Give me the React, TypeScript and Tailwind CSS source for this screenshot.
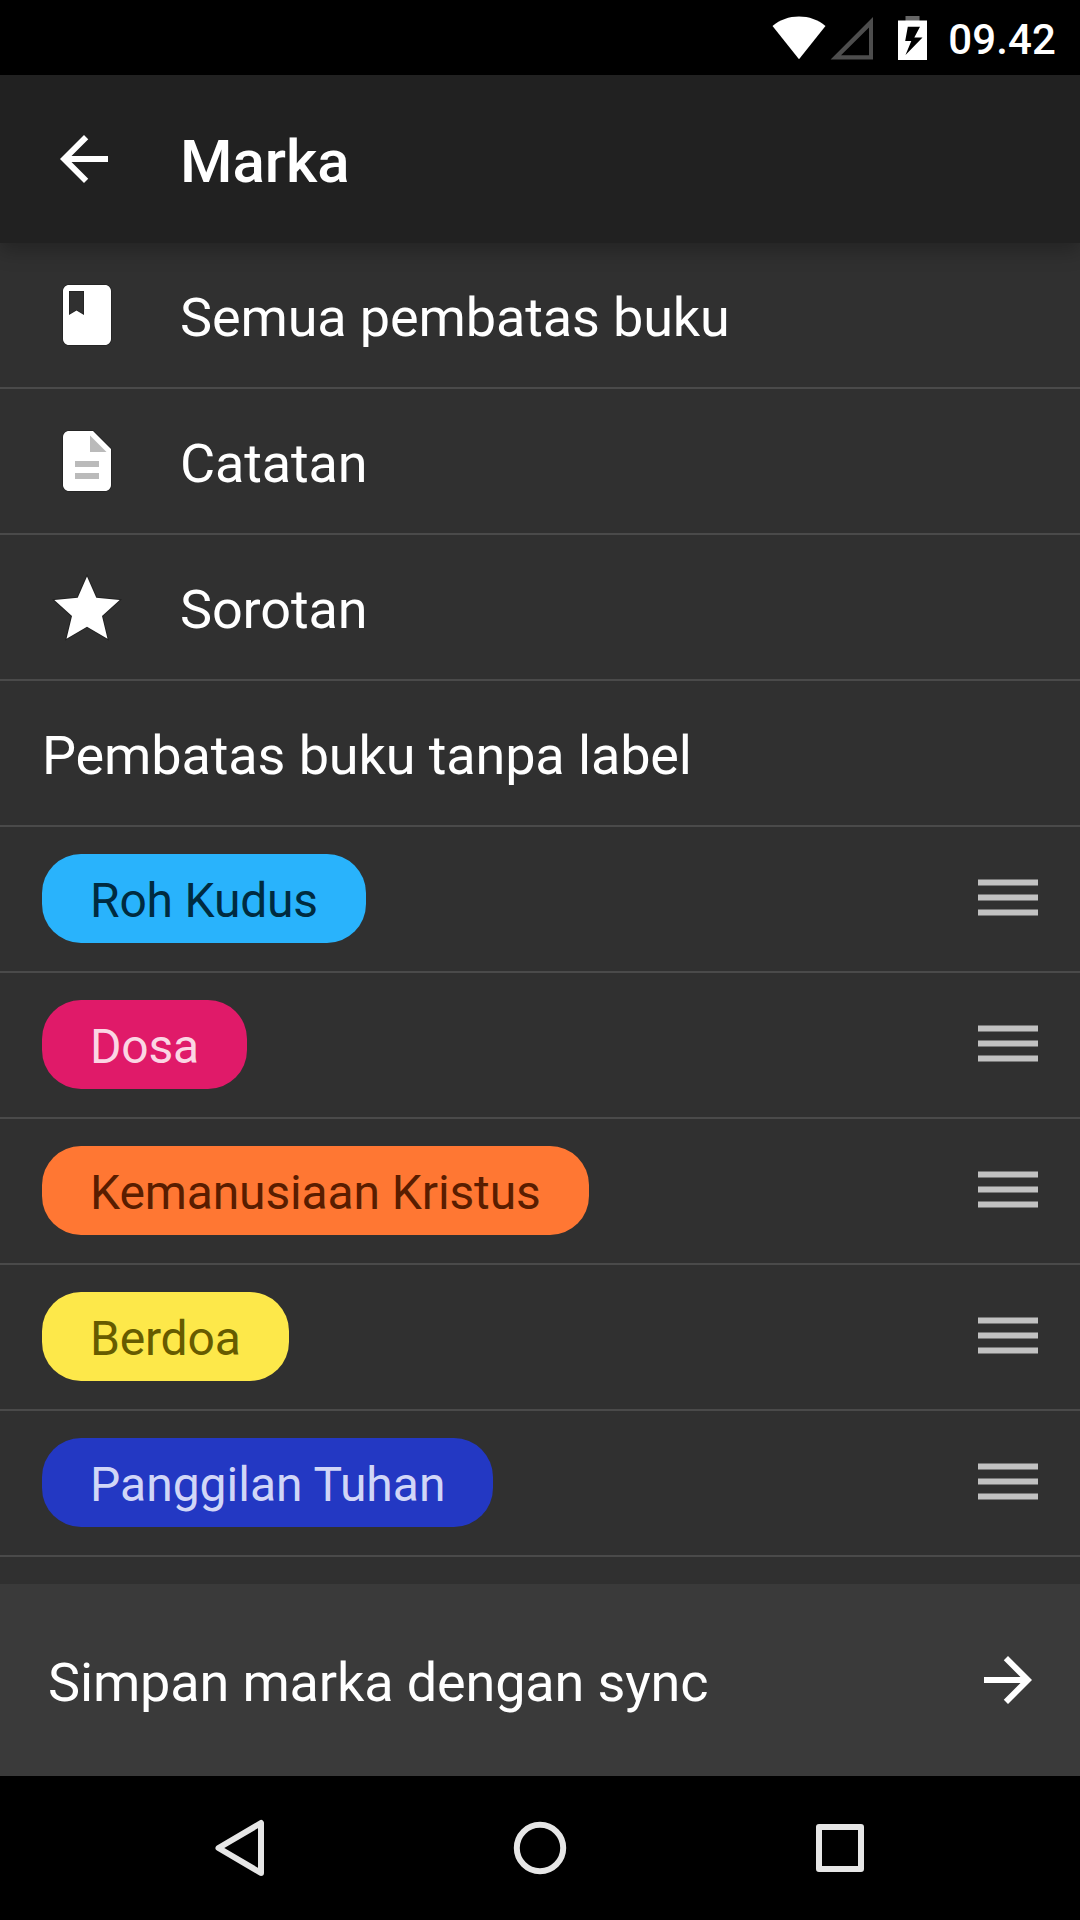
import type { ReactNode } from "react";

function StatusBar() {
  return (
    <div className="flex h-[75px] shrink-0 items-center justify-end bg-black pr-[24px]">
      <svg className="h-[44px] w-[54px]" viewBox="0 0 54 44" fill="#fff">
        <path d="M0.5 10C8 3.8 17 .6 27 .6S46 3.8 53.5 10L27 43.2z" />
      </svg>
      <svg className="ml-[4px] h-[44px] w-[44px]" viewBox="0 0 44 44" fill="#4d4d4d">
        <path fillRule="evenodd" d="M43 1v42.5H.6zM39 11.500L11 39.300h28z" />
      </svg>
      <svg className="ml-[23px] h-[44px] w-[30px]" viewBox="0 0 30 44">
        <path fill="#666" d="M8.500 0h14v5h-14z" />
        <path fill="#fff" fillRule="evenodd" d="M1 4.500h29v39.500H1zM10.800 10.800L8.200 25h6.100L8.500 39L25.500 21.600h-8.200L23 10.800z" />
      </svg>
      <span className="ml-[21px] pt-[4px] text-[42px] font-medium leading-none tracking-[0.1px]">09.42</span>
    </div>
  );
}

function BookIcon() {
  return (
    <svg className="size-[72px]" viewBox="0 0 24 24">
      <path
        fill="#fff"
        stroke="#000"
        strokeOpacity="0.3"
        strokeWidth="0.5"
        paintOrder="stroke"
        fillRule="evenodd"
        d="M18 2H6c-1.100 0-2 .9-2 2v16c0 1.100.9 2 2 2h12c1.100 0 2-.9 2-2V4c0-1.100-.9-2-2-2zM6 4h5v8l-2.500-1.500L6 12V4z"
      />
    </svg>
  );
}

function NoteIcon() {
  return (
    <svg className="size-[72px]" viewBox="0 0 24 24">
      <path
        fill="#fff"
        stroke="#000"
        strokeOpacity="0.3"
        strokeWidth="0.5"
        paintOrder="stroke"
        d="M14 2H6c-1.100 0-2 .9-2 2v16c0 1.100.9 2 2 2h12c1.100 0 2-.9 2-2V8z"
      />
      <path fill="#bababa" d="M13 3.500V9h5.500zM8 12h8v2H8zM8 16h8v2H8z" />
    </svg>
  );
}

function StarIcon() {
  return (
    <svg className="size-[72px]" viewBox="0 0 72 72">
      <path
        fill="#fff"
        stroke="#000"
        strokeOpacity="0.3"
        strokeWidth="2"
        paintOrder="stroke"
        d="M36 5.500L45.300 26.700L68.700 29L51 45L56.500 67.700L36 55.700L15.500 67.700L21 45L3.300 29L26.700 26.700z"
      />
    </svg>
  );
}

function Row({ children, className }: { children: ReactNode; className?: string }) {
  return (
    <div className={`flex h-[146px] shrink-0 items-center border-b-2 border-[#4a4a4a] ${className ?? ""}`}>
      {children}
    </div>
  );
}

const categories = [
  { label: "Semua pembatas buku", icon: <BookIcon /> },
  { label: "Catatan", icon: <NoteIcon /> },
  { label: "Sorotan", icon: <StarIcon /> },
];

const labels = [
  { name: "Roh Kudus", style: "w-[324px] tracking-[-0.2px] bg-[#29b3fc] text-[#002b40]" },
  { name: "Dosa", style: "w-[205px] tracking-[-0.25px] bg-[#e01a69] text-[#fbd6e4]" },
  { name: "Kemanusiaan Kristus", style: "w-[547px] tracking-[-0.12px] bg-[#ff7733] text-[#591d00]" },
  { name: "Berdoa", style: "w-[247px] tracking-[-0.2px] bg-[#fde84a] text-[#665b00]" },
  { name: "Panggilan Tuhan", style: "w-[451px] bg-[#2338c3] text-[#d1d6f7]" },
];

export default function App() {
  return (
    <div className="flex h-[1920px] w-[1080px] flex-col overflow-hidden bg-[#303030] font-['Roboto',sans-serif] text-white">
      <StatusBar />
      <header className="relative z-10 flex h-[168px] shrink-0 items-center bg-[#212121] pl-[48px] shadow-[0_8px_18px_rgba(0,0,0,0.25)]">
        <svg className="size-[72px]" viewBox="0 0 24 24" fill="#fff">
          <path d="M20 11H7.830l5.590-5.590L12 4l-8 8 8 8 1.410-1.410L7.830 13H20v-2z" />
        </svg>
        <h1 className="ml-[60px] pt-[5px] text-[60px] font-medium leading-none">Marka</h1>
      </header>

      <main className="flex min-h-0 flex-1 flex-col">
        {categories.map((c) => (
          <Row key={c.label} className="pl-[51px]">
            {c.icon}
            <span className="ml-[57px] pt-[5px] text-[54px] leading-none tracking-[-0.13px]">{c.label}</span>
          </Row>
        ))}
        <Row className="pl-[42px]">
          <span className="pt-[5px] text-[54px] leading-none tracking-[-0.12px]">Pembatas buku tanpa label</span>
        </Row>
        {labels.map((l) => (
          <Row key={l.name} className="justify-between px-[42px]">
            <span className={`mb-px flex h-[89px] items-center whitespace-nowrap rounded-[39px] pl-[48px] pt-[4px] text-[48px] leading-none ${l.style}`}>
              {l.name}
            </span>
            <svg className="mb-[3px] h-[37px] w-[60px]" viewBox="0 0 60 37" fill="#c1c1c1">
              <path d="M0 .5h60v6H0zM0 15.500h60v6H0zM0 30.500h60v6H0z" />
            </svg>
          </Row>
        ))}
      </main>

      <footer className="flex h-[192px] shrink-0 items-center justify-between bg-[#3a3a3a] pl-[48px] pr-[36px]">
        <span className="pt-[5px] text-[54px] leading-none tracking-[-0.15px]">Simpan marka dengan sync</span>
        <svg className="size-[72px]" viewBox="0 0 24 24" fill="#fff">
          <path d="M12 4l-1.410 1.410L16.170 11H4v2h12.170l-5.580 5.590L12 20l8-8z" />
        </svg>
      </footer>

      <nav className="flex h-[144px] shrink-0 items-center justify-center gap-[240px] bg-black">
        <svg className="size-[60px]" viewBox="0 0 60 60" fill="none" stroke="#e6e6e6" strokeWidth="6" strokeLinejoin="round">
          <path d="M51 5V55L8.500 30z" />
        </svg>
        <svg className="size-[60px]" viewBox="0 0 60 60" fill="none" stroke="#e6e6e6" strokeWidth="6">
          <circle cx="30" cy="30" r="23.200" />
        </svg>
        <svg className="size-[60px]" viewBox="0 0 60 60" fill="none" stroke="#e6e6e6" strokeWidth="6" strokeLinejoin="round">
          <path d="M9 9h42v42H9z" />
        </svg>
      </nav>
    </div>
  );
}
